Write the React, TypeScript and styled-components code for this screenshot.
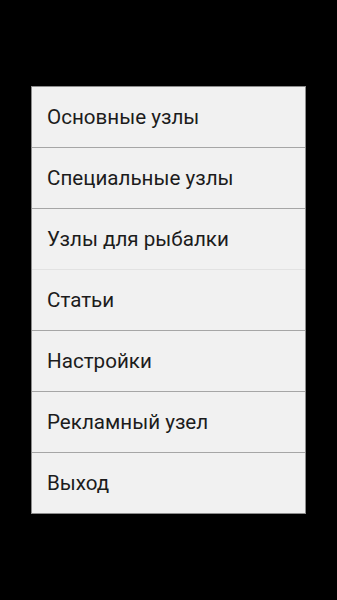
import styled, { createGlobalStyle } from 'styled-components'

const GlobalStyle = createGlobalStyle`
  html, body {
    margin: 0;
    padding: 0;
    background: #000;
  }
`

const Screen = styled.div`
  height: 600px;
  display: flex;
  align-items: center;
  justify-content: center;
`

const Menu = styled.ul`
  list-style: none;
  margin: 0;
  padding: 0;
  width: 275px;
  background: #f1f1f1;
  border: 1px solid #8c8c8c;
  box-sizing: border-box;
`

const Item = styled.li<{ $light?: boolean }>`
  height: 61px;
  display: flex;
  align-items: center;
  padding-left: 15px;
  font-family: Roboto, 'Noto Sans', sans-serif;
  font-size: 20.6px;
  color: #1c1c1c;
  border-top: 1px solid ${(p) => (p.$light ? '#e2e2e2' : '#a6a6a6')};
  box-sizing: border-box;

  &:first-child {
    border-top: none;
    height: 60px;
  }
`

const items = [
  { label: 'Основные узлы' },
  { label: 'Специальные узлы' },
  { label: 'Узлы для рыбалки' },
  { label: 'Статьи', light: true },
  { label: 'Настройки' },
  { label: 'Рекламный узел' },
  { label: 'Выход' },
]

export default function App() {
  return (
    <>
      <GlobalStyle />
      <Screen>
        <Menu>
          {items.map((it) => (
            <Item key={it.label} $light={it.light}>
              {it.label}
            </Item>
          ))}
        </Menu>
      </Screen>
    </>
  )
}
